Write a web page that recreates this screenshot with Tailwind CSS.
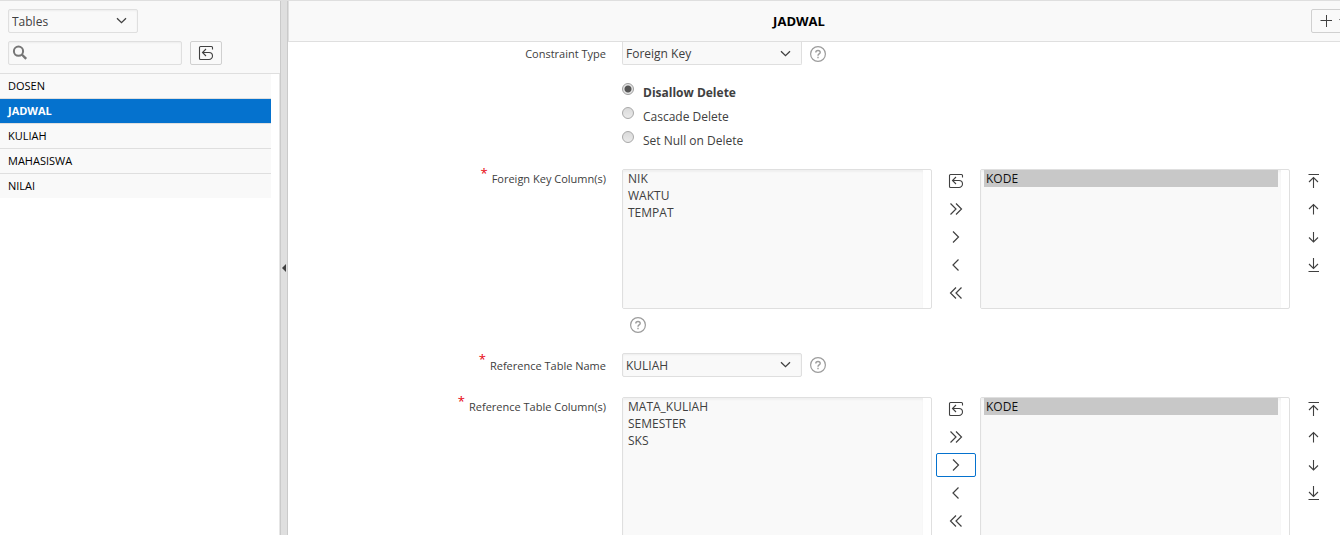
<!DOCTYPE html>
<html lang="en">
<head>
<meta charset="utf-8">
<title>Object Browser</title>
<script src="https://cdn.jsdelivr.net/npm/@tailwindcss/browser@4"></script>
</head>
<body class="flex h-screen flex-col overflow-hidden border-t border-[#dfdfdf] bg-white font-['Segoe_UI','Open_Sans',sans-serif] text-[12px] leading-4 text-[#404040]">
<svg class="hidden" aria-hidden="true">
  <defs>
    <symbol id="reset" viewBox="0 0 16 16"><path d="M14.500 4.500v-2a1 1 0 0 0-1-1h-11a1 1 0 0 0-1 1v11a1 1 0 0 0 1 1h8.500a3.500 3.500 0 0 0 0-7H4.500M8 4 4.500 7.500 8 11" fill="none" stroke="currentColor" stroke-width="1.100"/></symbol>
    <symbol id="all-right" viewBox="0 0 16 16"><path d="m2.500 2.500 5.500 5.500-5.500 5.500m5.500-11 5.500 5.500-5.500 5.500" fill="none" stroke="currentColor" stroke-width="1.200"/></symbol>
    <symbol id="right" viewBox="0 0 16 16"><path d="m5 2.500 5.500 5.500-5.500 5.500" fill="none" stroke="currentColor" stroke-width="1.200"/></symbol>
    <symbol id="left" viewBox="0 0 16 16"><path d="m10.500 2.500-5.500 5.500 5.500 5.500" fill="none" stroke="currentColor" stroke-width="1.200"/></symbol>
    <symbol id="all-left" viewBox="0 0 16 16"><path d="m13.500 2.500-5.500 5.500 5.500 5.500m-5.500-11-5.500 5.500 5.500 5.500" fill="none" stroke="currentColor" stroke-width="1.200"/></symbol>
    <symbol id="top" viewBox="0 0 16 16"><path d="M2.500 1.500h10.500M7.500 15V4.500M3 9l4.500-4.500L12 9" fill="none" stroke="currentColor" stroke-width="1.100"/></symbol>
    <symbol id="up" viewBox="0 0 16 16"><path d="M7.500 13.500V3.500M3 8l4.500-4.500L12 8" fill="none" stroke="currentColor" stroke-width="1.100"/></symbol>
    <symbol id="down" viewBox="0 0 16 16"><path d="M7.500 3v10M3 8.500l4.500 4.500L12 8.500" fill="none" stroke="currentColor" stroke-width="1.100"/></symbol>
    <symbol id="bottom" viewBox="0 0 16 16"><path d="M2.500 14.500h10.500M7.500 1v10.500M3 7l4.500 4.500L12 7" fill="none" stroke="currentColor" stroke-width="1.100"/></symbol>
    <symbol id="caret" viewBox="0 0 12 12"><path d="m1 3.200 4.500 4.500 4.500-4.500" fill="none" stroke="currentColor" stroke-width="1.300"/></symbol>
    <symbol id="help" viewBox="0 0 16 16"><circle cx="8" cy="8" r="7.400" fill="none" stroke="currentColor" stroke-width="1.200"/><path d="M5.800 6.600c0-1.400 1-2.100 2.200-2.100s2.200.7 2.200 1.900c0 1.600-2.200 1.500-2.200 3.300M8 10.800v1.400" fill="none" stroke="currentColor" stroke-width="1.400"/></symbol>
  </defs>
</svg>
<div class="flex min-h-0 flex-1">
  <aside class="flex w-[280px] shrink-0 flex-col">
    <div class="flex flex-col gap-2 border-b border-[#dfdfdf] bg-[#f9f9f9] p-2">
      <div class="grid w-[130px]">
        <select aria-label="Object type" class="col-start-1 row-start-1 h-6 w-full appearance-none rounded-xs border border-[#dfdfdf] bg-[#f9f9f9] px-[3px] pt-[2px] shadow-[inset_0_1px_2px_#0000000d]"><option>Tables</option></select>
        <svg class="pointer-events-none col-start-1 row-start-1 mr-[10px] size-3 self-center justify-self-end"><use href="#caret"/></svg>
      </div>
      <div class="flex gap-2">
        <div class="grid w-[174px]">
          <input type="text" aria-label="Search" class="col-start-1 row-start-1 h-6 w-full rounded-xs border border-[#dfdfdf] bg-[#f9f9f9] pr-1 pl-6 shadow-[inset_0_1px_2px_#0000000d]">
          <svg class="pointer-events-none col-start-1 row-start-1 ml-1 size-4 self-center text-[#767676]" viewBox="0 0 16 16" fill="none" stroke="currentColor"><circle cx="6.500" cy="6.200" r="4.600" stroke-width="2"/><path d="m9.800 9.500 4.400 4.400" stroke-width="2.400"/></svg>
        </div>
        <button aria-label="Refresh" class="flex h-6 w-8 items-center justify-center rounded-xs border border-[#d0d0d0] bg-[#f9f9f9]"><svg class="size-4"><use href="#reset"/></svg></button>
      </div>
    </div>
    <nav class="flex-1 border-r border-[#e6e6e6] pr-2" aria-label="Tables">
      <ul class="divide-y divide-[#dfdfdf] bg-[#f9f9f9] text-[11px] leading-6 text-black">
        <li><a href="#" class="block px-2">DOSEN</a></li>
        <li><a href="#" aria-current="page" class="block bg-[#0572ce] px-2 font-bold text-white">JADWAL</a></li>
        <li><a href="#" class="block px-2">KULIAH</a></li>
        <li><a href="#" class="block px-2">MAHASISWA</a></li>
        <li><a href="#" class="block px-2">NILAI</a></li>
      </ul>
    </nav>
  </aside>
  <button aria-label="Collapse sidebar" class="flex w-2 shrink-0 items-center justify-center border-x border-[#cacaca] bg-[#dfdfdf]"><svg class="h-2 w-1 shrink-0" viewBox="0 0 4 8"><path d="M4 0v8L0 4z" fill="#404040"/></svg></button>

  <main class="flex min-w-0 flex-1 flex-col overflow-hidden">
    <header class="flex h-[41px] shrink-0 items-center border-b border-l border-[#dfdfdf] bg-[#f9f9f9]">
      <h1 class="flex-1 text-center text-[13px] font-bold text-black">JADWAL</h1>
      <button aria-label="Create" class="-mr-3 ml-[2px] flex h-6 w-[41px] shrink-0 items-center gap-[6px] rounded-xs border border-[#d0d0d0] bg-[#f9f9f9] pl-2">
        <svg class="size-3 shrink-0" viewBox="0 0 12 12"><path d="M6.500 0v12M.5 5.500h12" stroke="#404040" fill="none"/></svg>
        <svg class="h-2 w-2 shrink-0" viewBox="0 0 8 8"><path d="M1 2h7L4.500 6z" fill="#404040"/></svg>
      </button>
    </header>
    <form class="grid grid-cols-[318px_1fr] gap-x-4 pr-[6px]">
      <label for="ctype" class="pt-1 text-right text-[11px]">Constraint Type</label>
      <div class="flex items-center gap-2">
        <div class="grid w-[180px]">
          <select id="ctype" class="col-start-1 row-start-1 h-[23px] w-full appearance-none rounded-b-xs border border-t-0 border-[#dfdfdf] bg-[#f9f9f9] px-[3px] pt-[2px]"><option>Foreign Key</option></select>
          <svg class="pointer-events-none col-start-1 row-start-1 mr-[10px] size-3 self-center justify-self-end"><use href="#caret"/></svg>
        </div>
        <button type="button" aria-label="Help" class="text-[#9c9c9c]"><svg class="block size-4"><use href="#help"/></svg></button>
      </div>

      <fieldset class="col-start-2 mt-4">
        <label class="flex h-6 gap-[9px] pt-[2px] font-bold"><input type="radio" name="del" checked class="size-3 shrink-0 appearance-none rounded-full border border-[#a0a0a0] bg-[#e4e4e4] checked:bg-[radial-gradient(circle,#555_3px,#e4e4e4_4px)]"><span class="pt-[2px]">Disallow Delete</span></label>
        <label class="flex h-6 gap-[9px] pt-[2px]"><input type="radio" name="del" class="size-3 shrink-0 appearance-none rounded-full border border-[#a8a8a8] bg-linear-to-b from-[#dadada] to-[#eaeaea]"><span class="pt-[2px]">Cascade Delete</span></label>
        <label class="flex h-6 gap-[9px] pt-[2px]"><input type="radio" name="del" class="size-3 shrink-0 appearance-none rounded-full border border-[#a8a8a8] bg-linear-to-b from-[#dadada] to-[#eaeaea]"><span class="pt-[2px]">Set Null on Delete</span></label>
      </fieldset>

      <label for="fk" class="mt-4 flex justify-end gap-1 text-[11px]"><span class="text-[13px] leading-2 text-red-600">*</span><span class="pt-[2px]">Foreign Key Column(s)</span></label>
      <div class="mt-4">
        <div class="flex gap-1">
          <div class="h-[140px] min-w-0 flex-1 rounded-xs border border-[#dfdfdf] pr-2"><select id="fk" multiple class="h-full w-full overflow-hidden bg-[#f9f9f9] px-[3px] shadow-[inset_0_2px_2px_#0000000a]"><option class="h-[17px] px-[2px] py-0">NIK</option><option class="h-[17px] px-[2px] py-0">WAKTU</option><option class="h-[17px] px-[2px] py-0">TEMPAT</option></select></div>
          <div class="flex w-10 flex-col gap-1">
            <button type="button" aria-label="Reset" class="flex h-6 items-center justify-center"><svg class="size-4"><use href="#reset"/></svg></button>
            <button type="button" aria-label="Move all" class="flex h-6 items-center justify-center"><svg class="size-4"><use href="#all-right"/></svg></button>
            <button type="button" aria-label="Move" class="flex h-6 items-center justify-center"><svg class="size-4"><use href="#right"/></svg></button>
            <button type="button" aria-label="Remove" class="flex h-6 items-center justify-center"><svg class="size-4"><use href="#left"/></svg></button>
            <button type="button" aria-label="Remove all" class="flex h-6 items-center justify-center"><svg class="size-4"><use href="#all-left"/></svg></button>
          </div>
          <div class="h-[140px] min-w-0 flex-1 rounded-xs border border-[#dfdfdf] pr-2"><select multiple aria-label="Selected foreign key columns" class="h-full w-full overflow-hidden bg-[#f9f9f9] px-[3px] shadow-[inset_0_2px_2px_#0000000a]"><option selected class="h-[17px] bg-[linear-gradient(#c8c8c8,#c8c8c8)] px-[2px] py-0">KODE</option></select></div>
          <div class="flex w-10 flex-col gap-1">
            <button type="button" aria-label="Top" class="flex h-6 items-center justify-center"><svg class="size-4"><use href="#top"/></svg></button>
            <button type="button" aria-label="Up" class="flex h-6 items-center justify-center"><svg class="size-4"><use href="#up"/></svg></button>
            <button type="button" aria-label="Down" class="flex h-6 items-center justify-center"><svg class="size-4"><use href="#down"/></svg></button>
            <button type="button" aria-label="Bottom" class="flex h-6 items-center justify-center"><svg class="size-4"><use href="#bottom"/></svg></button>
          </div>
        </div>
        <button type="button" aria-label="Help" class="m-2 block text-[#9c9c9c]"><svg class="block size-4"><use href="#help"/></svg></button>
      </div>

      <label for="rtable" class="mt-3 flex justify-end gap-1 text-[11px]"><span class="text-[13px] leading-3 text-red-600">*</span><span class="pt-[5px]">Reference Table Name</span></label>
      <div class="mt-3 flex items-center gap-2">
        <div class="grid w-[180px]">
          <select id="rtable" class="col-start-1 row-start-1 h-6 w-full appearance-none rounded-xs border border-[#dfdfdf] bg-[#f9f9f9] px-[3px] pt-[2px] shadow-[inset_0_1px_2px_#0000000d]"><option>KULIAH</option></select>
          <svg class="pointer-events-none col-start-1 row-start-1 mr-[10px] size-3 self-center justify-self-end"><use href="#caret"/></svg>
        </div>
        <button type="button" aria-label="Help" class="text-[#9c9c9c]"><svg class="block size-4"><use href="#help"/></svg></button>
      </div>

      <label for="rc" class="mt-5 flex justify-end gap-1 text-[11px]"><span class="text-[13px] leading-2 text-red-600">*</span><span class="pt-[2px]">Reference Table Column(s)</span></label>
      <div class="mt-5">
        <div class="flex gap-1">
          <div class="h-[140px] min-w-0 flex-1 rounded-xs border border-[#dfdfdf] pr-2"><select id="rc" multiple class="h-full w-full overflow-hidden bg-[#f9f9f9] px-[3px] shadow-[inset_0_2px_2px_#0000000a]"><option class="h-[17px] px-[2px] py-0">MATA_KULIAH</option><option class="h-[17px] px-[2px] py-0">SEMESTER</option><option class="h-[17px] px-[2px] py-0">SKS</option></select></div>
          <div class="flex w-10 flex-col gap-1">
            <button type="button" aria-label="Reset" class="flex h-6 items-center justify-center"><svg class="size-4"><use href="#reset"/></svg></button>
            <button type="button" aria-label="Move all" class="flex h-6 items-center justify-center"><svg class="size-4"><use href="#all-right"/></svg></button>
            <button type="button" aria-label="Move" class="flex h-6 items-center justify-center rounded-xs border border-[#0572ce]"><svg class="size-4"><use href="#right"/></svg></button>
            <button type="button" aria-label="Remove" class="flex h-6 items-center justify-center"><svg class="size-4"><use href="#left"/></svg></button>
            <button type="button" aria-label="Remove all" class="flex h-6 items-center justify-center"><svg class="size-4"><use href="#all-left"/></svg></button>
          </div>
          <div class="h-[140px] min-w-0 flex-1 rounded-xs border border-[#dfdfdf] pr-2"><select multiple aria-label="Selected reference columns" class="h-full w-full overflow-hidden bg-[#f9f9f9] px-[3px] shadow-[inset_0_2px_2px_#0000000a]"><option selected class="h-[17px] bg-[linear-gradient(#c8c8c8,#c8c8c8)] px-[2px] py-0">KODE</option></select></div>
          <div class="flex w-10 flex-col gap-1">
            <button type="button" aria-label="Top" class="flex h-6 items-center justify-center"><svg class="size-4"><use href="#top"/></svg></button>
            <button type="button" aria-label="Up" class="flex h-6 items-center justify-center"><svg class="size-4"><use href="#up"/></svg></button>
            <button type="button" aria-label="Down" class="flex h-6 items-center justify-center"><svg class="size-4"><use href="#down"/></svg></button>
            <button type="button" aria-label="Bottom" class="flex h-6 items-center justify-center"><svg class="size-4"><use href="#bottom"/></svg></button>
          </div>
        </div>
      </div>
    </form>
  </main>
</div>
</body>
</html>
